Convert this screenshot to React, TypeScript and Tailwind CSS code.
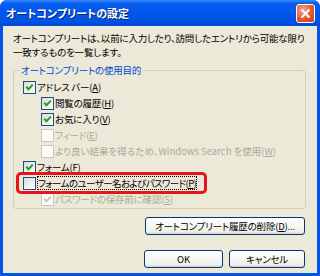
import React from "react";

const font = { fontFamily: '"Noto Sans CJK JP", "Noto Sans", sans-serif', fontFeatureSettings: '"palt"' } as React.CSSProperties;

function Check({ checked, disabled }: { checked?: boolean; disabled?: boolean }) {
  return (
    <span
      className={`w-[13px] h-[13px] border flex items-center justify-center shrink-0 ${
        disabled
          ? "border-[#CAC8BB] bg-[#FBFBF8]"
          : "border-[#1C5180] bg-[linear-gradient(135deg,#DCDCD7,#FFFFFF)]"
      }`}
    >
      {checked && (
        <svg width="9" height="9" viewBox="0 0 9 9">
          <path
            d="M1.2 3.8 L3.5 6.3 L7.8 1.6"
            stroke={disabled ? "#CAC8BB" : "#21A121"}
            strokeWidth="2"
            fill="none"
          />
        </svg>
      )}
    </span>
  );
}

function Label({ text, k, disabled, className }: { text: string; k: string; disabled?: boolean; className?: string }) {
  return (
    <span className={`${disabled ? "text-[#ACA899]" : "text-black"} ${className ?? ""}`}>
      {text}(<span className="underline underline-offset-1">{k}</span>)
    </span>
  );
}

function Row({
  level,
  checked,
  disabled,
  children,
}: {
  level: 1 | 2;
  checked?: boolean;
  disabled?: boolean;
  children: React.ReactNode;
}) {
  return (
    <div className={`flex items-center h-[16px] gap-[1px] ${level === 1 ? "pl-[9px]" : "pl-[27px]"}`}>
      <Check checked={checked} disabled={disabled} />
      {children}
    </div>
  );
}

function XPButton({ children, className }: { children: React.ReactNode; className?: string }) {
  return (
    <div
      className={`h-[18px] border border-[#003C74] rounded-[3px] bg-[linear-gradient(180deg,#FFFFFF,#F0F0EA_85%,#D6D0C5)] flex items-center justify-center text-black ${className ?? ""}`}
    >
      {children}
    </div>
  );
}

export default function App() {
  return (
    <div className="w-[320px] h-[276px] flex flex-col bg-[#0554E8] rounded-t-[7px] overflow-hidden" style={font}>
      <div className="h-[26px] shrink-0 flex items-center pl-[6px] pr-[5px] bg-[linear-gradient(180deg,#3A8CFF_0%,#0A5FEF_12%,#0058EE_40%,#0054E8_75%,#0148D6_100%)]">
        <span className="text-white font-bold text-[11px] [text-shadow:1px_1px_0_#0A1E6E]">オートコンプリートの設定</span>
        <div className="ml-auto w-[19px] h-[19px] rounded-[3px] border border-white bg-[radial-gradient(circle_at_35%_30%,#F4A890,#E3572F_55%,#C83A16)] flex items-center justify-center">
          <svg width="11" height="11" viewBox="0 0 11 11">
            <path d="M1.5 1.5 L9.5 9.5 M9.5 1.5 L1.5 9.5" stroke="white" strokeWidth="2" />
          </svg>
        </div>
      </div>
      <div className="flex-1 mx-[3px] mb-[3px] bg-[#ECE9D8] flex flex-col pt-[5px] text-[9.5px] tracking-[-0.2px] text-black">
        <div className="pl-[10px] leading-[14px] whitespace-nowrap">
          <div>オートコンプリートは、以前に入力したり、訪問したエントリから可能な限り</div>
          <div>一致するものを一覧します。</div>
        </div>
        <fieldset className="ml-[10px] w-[293px] mt-[4px] border border-[#D0D0BF] rounded-[3px] pb-[1px]">
          <legend className="ml-[5px] px-[2px] text-[#0046D5] leading-[14px]">オートコンプリートの使用目的</legend>
          <div className="pt-[2px] flex flex-col relative whitespace-nowrap">
            <Row level={1} checked>
              <Label text="アドレス バー" k="A" />
            </Row>
            <Row level={2} checked>
              <Label text="閲覧の履歴" k="H" />
            </Row>
            <Row level={2} checked>
              <Label text="お気に入り" k="V" />
            </Row>
            <Row level={2} disabled>
              <Label text="フィード" k="E" disabled />
            </Row>
            <Row level={2} disabled>
              <Label text="より良い結果を得るため、Windows Search を使用" k="W" disabled className="tracking-normal" />
            </Row>
            <Row level={1} checked>
              <Label text="フォーム" k="F" />
            </Row>
            <Row level={1}>
              <span className="border border-dotted border-black leading-[12px]">
                <Label text="フォームのユーザー名およびパスワード" k="P" className="tracking-[-0.6px]" />
              </span>
            </Row>
            <Row level={2} checked disabled>
              <Label text="パスワードの保存前に確認" k="S" disabled />
            </Row>
            <div className="absolute left-[2px] top-[95px] w-[191px] h-[22px] border-[3px] border-[#E8141C] rounded-[5px]" />
          </div>
        </fieldset>
        <div className="flex justify-end pr-[12px] mt-[8px]">
          <XPButton className="w-[160px]">
            オートコンプリート履歴の削除(<span className="underline">D</span>)...
          </XPButton>
        </div>
        <div className="flex justify-end gap-[6px] pr-[12px] mt-[15px]">
          <XPButton className="w-[79px]">OK</XPButton>
          <XPButton className="w-[76px]">キャンセル</XPButton>
        </div>
      </div>
    </div>
  );
}
